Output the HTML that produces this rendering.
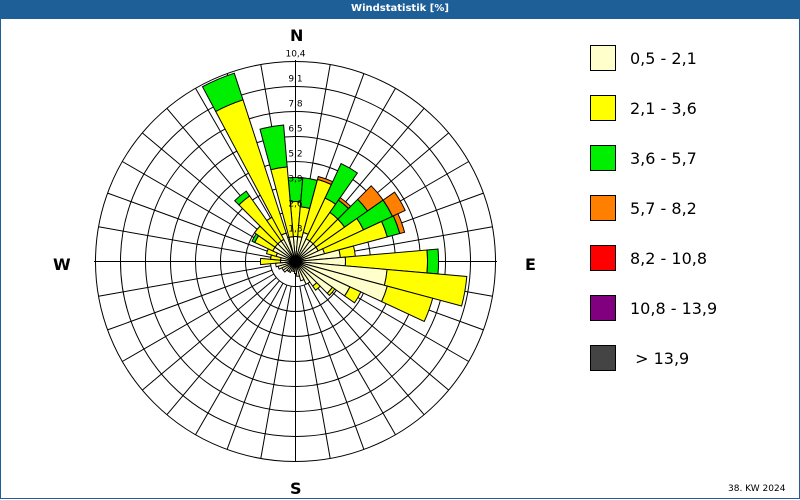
<!DOCTYPE html>
<html><head><meta charset="utf-8"><style>
body{margin:0;width:800px;height:500px;background:#fff;font-family:"Liberation Sans",sans-serif;overflow:hidden;position:relative}
#t{position:absolute;left:0;top:0;width:800px;height:19px;background:#1f5f98;color:#fff;font:bold 10px "DejaVu Sans",sans-serif;text-align:center;line-height:18px}
#frame{position:absolute;left:0;top:19px;width:798px;height:479px;border:1px solid #1f5f98;border-top:none}
.lb{position:absolute;left:590px;width:24px;height:24px;border:1px solid #000}
.lt{position:absolute;left:630px;font:16px "DejaVu Sans",sans-serif;color:#000}
.c{position:absolute;font:bold 16px "DejaVu Sans",sans-serif}
</style></head><body>
<div id="t">Windstatistik [%]</div><div id="frame"></div>
<svg id="s" width="800" height="500" style="position:absolute;left:0;top:0"></svg>
<div class="c" style="left:290px;top:26px">N</div>
<div class="c" style="left:525px;top:255px">E</div>
<div class="c" style="left:53px;top:255px">W</div>
<div class="c" style="left:290px;top:479px">S</div>
<div class="lb" style="top:45px;background:#ffffcc"></div><div class="lt" style="top:49px">0,5 - 2,1</div>
<div class="lb" style="top:95px;background:#ffff00"></div><div class="lt" style="top:99px">2,1 - 3,6</div>
<div class="lb" style="top:145px;background:#00ee00"></div><div class="lt" style="top:149px">3,6 - 5,7</div>
<div class="lb" style="top:195px;background:#ff8000"></div><div class="lt" style="top:199px">5,7 - 8,2</div>
<div class="lb" style="top:245px;background:#ff0000"></div><div class="lt" style="top:249px">8,2 - 10,8</div>
<div class="lb" style="top:295px;background:#800080"></div><div class="lt" style="top:299px">10,8 - 13,9</div>
<div class="lb" style="top:345px;background:#444"></div><div class="lt" style="top:349px">&nbsp;&gt; 13,9</div>
<div style="position:absolute;left:728px;top:484px;font:9px 'DejaVu Sans',sans-serif">38. KW 2024</div>
<script>
var cx=295.5,cy=261.5,s=document.getElementById('s'),h='';
function P(r,a){a=(a-90)*Math.PI/180;return [(cx+r*Math.cos(a)).toFixed(1),(cy+r*Math.sin(a)).toFixed(1)];}
for(var r=25;r<=200;r+=25)h+='<circle cx="'+cx+'" cy="'+cy+'" r="'+r+'" fill="none" stroke="#000" stroke-width="1"/>';
for(var a=0;a<360;a+=10){var p=P(25,a),q=P(200,a);h+='<line x1="'+p[0]+'" y1="'+p[1]+'" x2="'+q[0]+'" y2="'+q[1]+'" stroke="#000"/>';}
h+='<line x1="'+cx+'" y1="60" x2="'+cx+'" y2="462" stroke="#000"/><line x1="94" y1="'+cy+'" x2="497" y2="'+cy+'" stroke="#000"/>';
var C=['#ffffcc','#ffff00','#00ee00','#ff8000'];
var B={0:[25,60,84],10:[25,55,84],20:[30,85,85,88],30:[25,70,108],40:[25,60,75,78],50:[25,60,88,107],60:[25,75,107,121],70:[30,95,108,113],80:[45,60],90:[50,132,143],100:[92,172],110:[95,142],120:[60,72],130:[45,48],140:[30,35],150:[25],160:[20],170:[15],180:[12],190:[10],200:[10],210:[12],220:[12],230:[15],240:[15],250:[18],260:[20],270:[15,35],280:[15,25],290:[20,30],300:[25,45,48],310:[25,50],320:[25,80,86],330:[25,50],337:[30,170,198],350:[25,95,137]};
for(var k in B){var a=+k,v=B[k],r0=0;for(var i=0;i<v.length;i++){var r1=v[i];if(r1>r0){var p1=P(r0,a-5),p2=P(r1,a-5),p3=P(r1,a+5),p4=P(r0,a+5);
h+='<path d="M'+p1+' L'+p2+' A'+r1+' '+r1+' 0 0 1 '+p3+' L'+p4+(r0>0?' A'+r0+' '+r0+' 0 0 0 '+p1:'')+'Z" fill="'+C[i]+'" stroke="#000" stroke-width="1"/>';}r0=r1;}}
var L=['1,3','2,6','3,9','5,2','6,5','7,8','9,1','10,4'];
for(var i=0;i<8;i++)h+='<text x="'+cx+'" y="'+(cy-25*(i+1)-5)+'" text-anchor="middle" font-family="DejaVu Sans" font-size="9" fill="#000">'+L[i]+'</text>';
s.innerHTML=h;
</script>
</body></html>
